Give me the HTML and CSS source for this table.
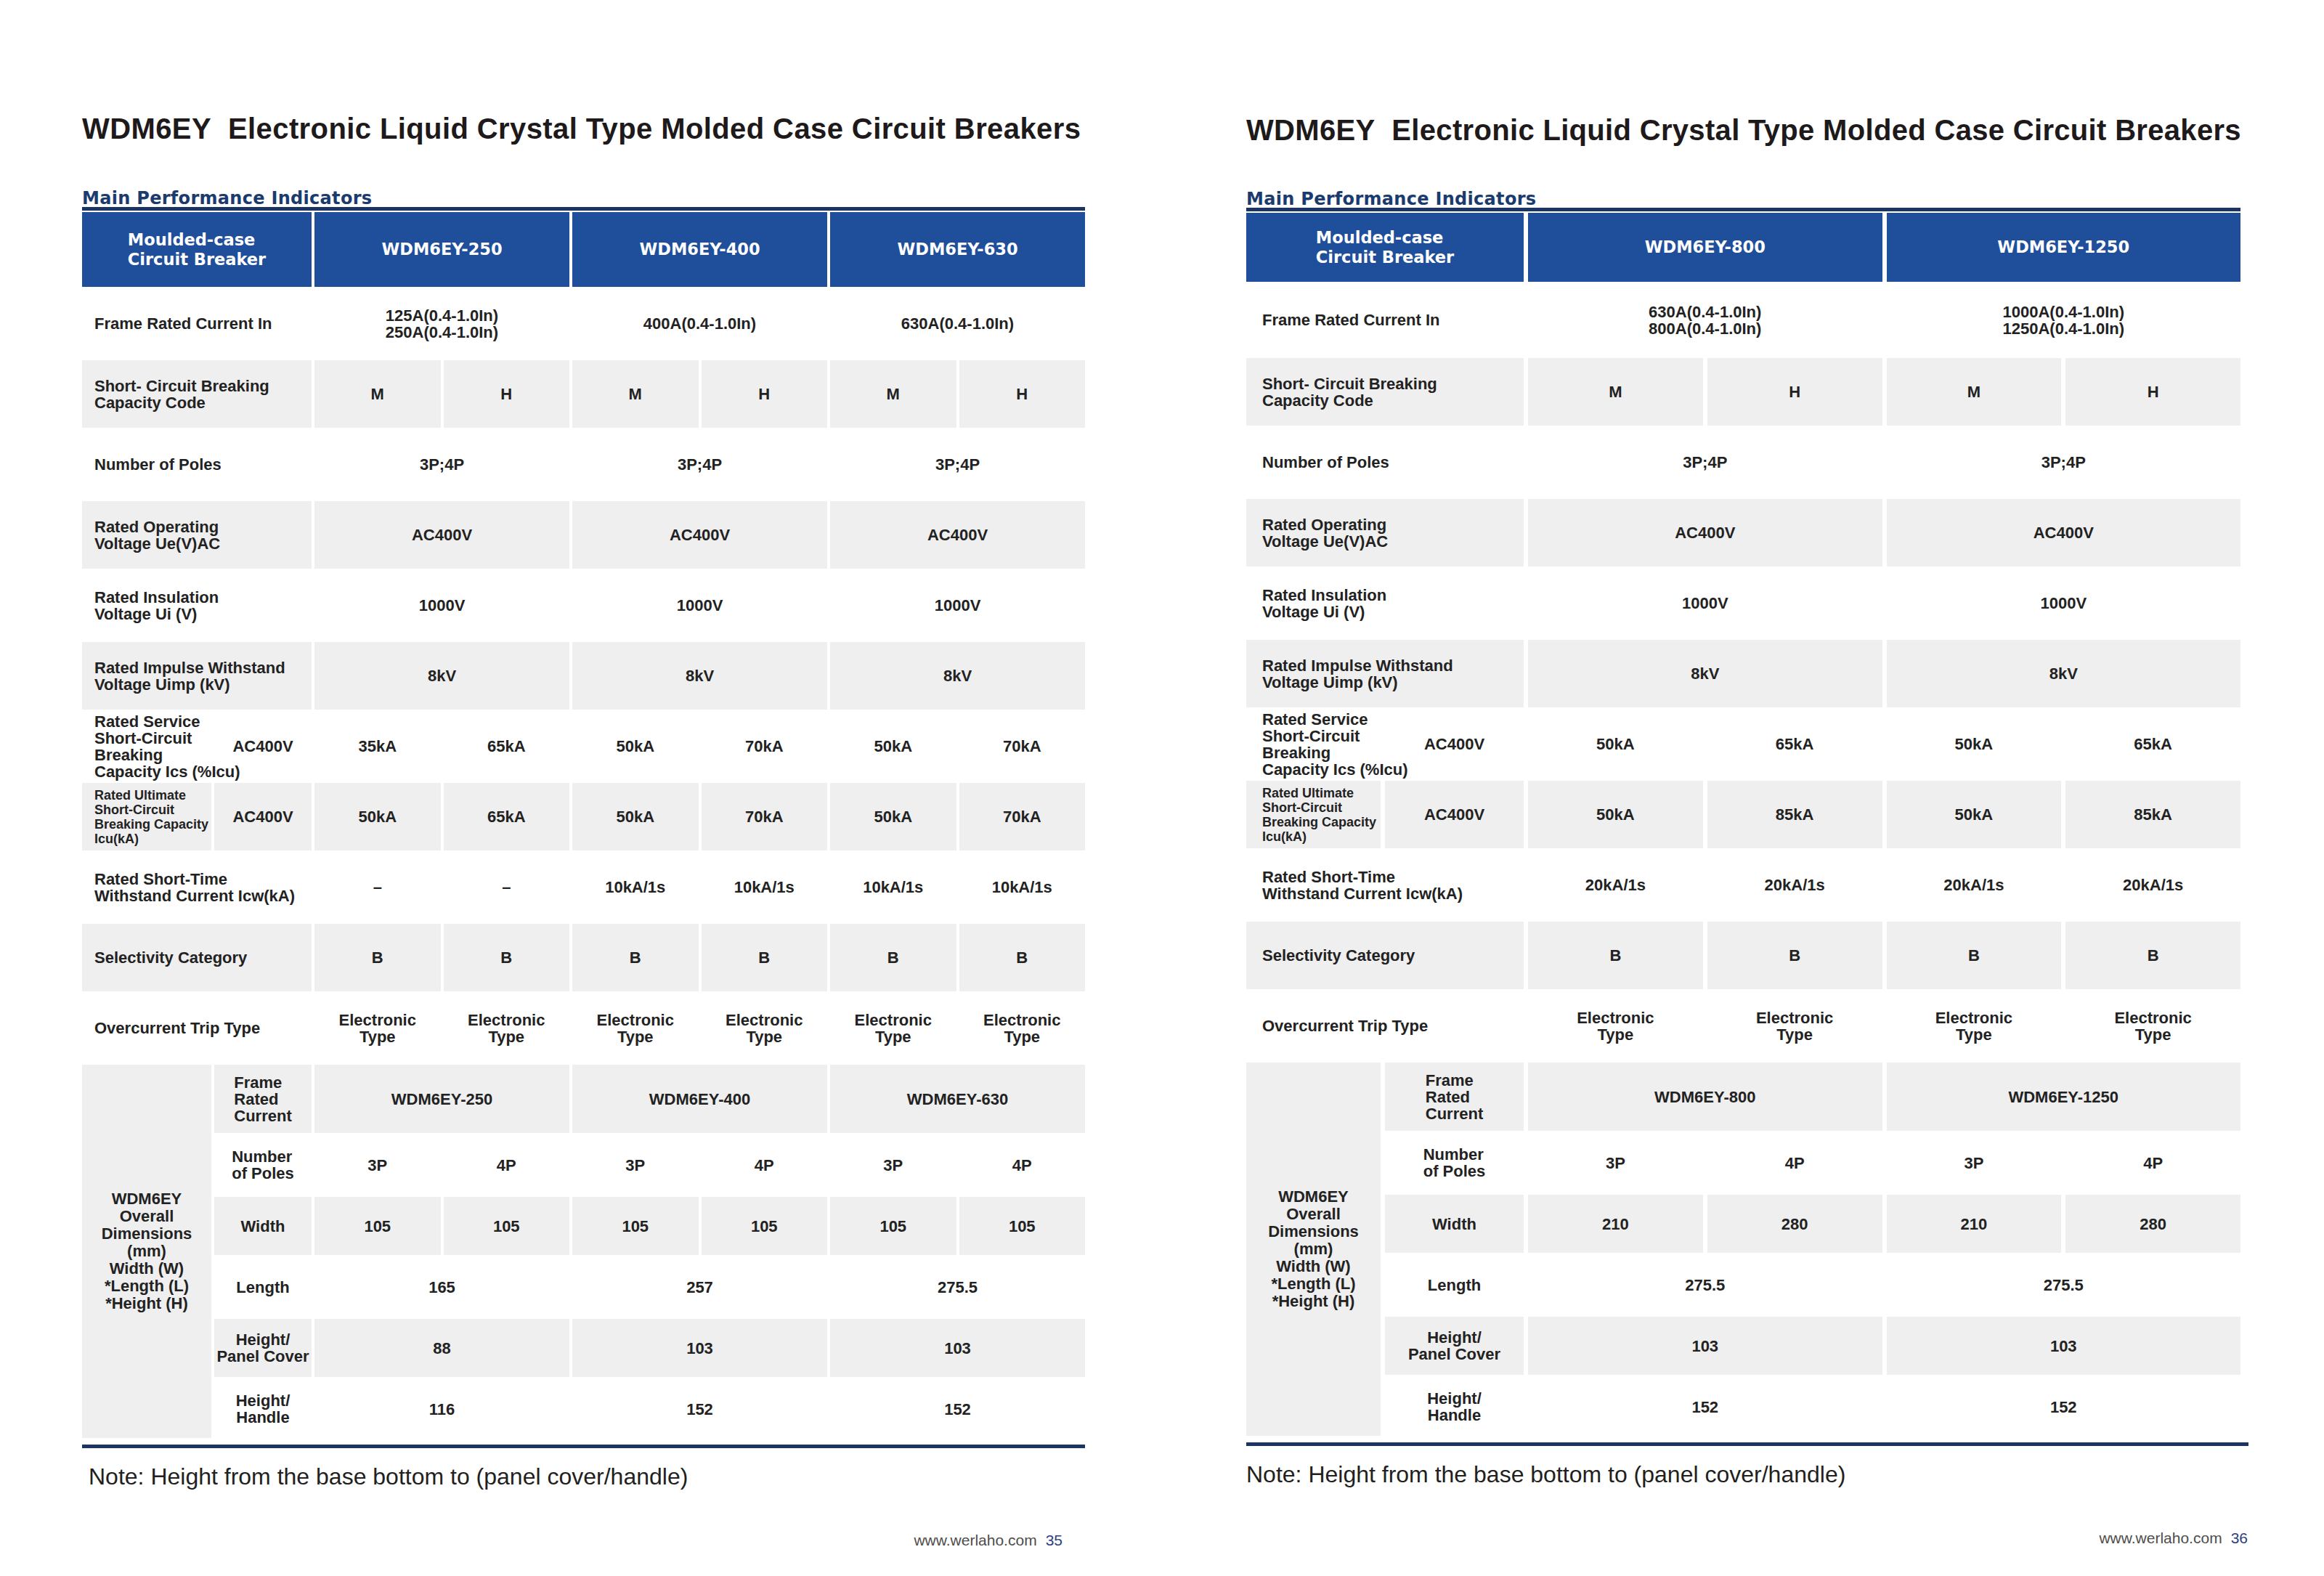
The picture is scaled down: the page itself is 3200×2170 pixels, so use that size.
FILE: index.html
```html
<!DOCTYPE html>
<html lang="en">
<head>
<meta charset="utf-8">
<title>WDM6EY Electronic Liquid Crystal Type Molded Case Circuit Breakers</title>
<link rel="stylesheet" href="styles.css">
</head>
<body>
<div class="spread">
  <section class="page page-l">
    <div class="content content-l">
      <h1 class="title">WDM6EY&nbsp; Electronic Liquid Crystal Type Molded Case Circuit Breakers</h1>
      <h2 class="subhead">Main Performance Indicators</h2>
      <div class="tbl tbl-l">
        <div class="c h s2"><span class="blk">Moulded-case<br>Circuit Breaker</span></div>
        <div class="c h s2">WDM6EY-250</div>
        <div class="c h s2">WDM6EY-400</div>
        <div class="c h s2">WDM6EY-630</div>

        <div class="c lbl s2">Frame Rated Current In</div>
        <div class="c s2">125A(0.4-1.0In)<br>250A(0.4-1.0In)</div>
        <div class="c s2">400A(0.4-1.0In)</div>
        <div class="c s2">630A(0.4-1.0In)</div>

        <div class="c lbl s2 g">Short- Circuit Breaking<br>Capacity Code</div>
        <div class="c g">M</div><div class="c g">H</div>
        <div class="c g">M</div><div class="c g">H</div>
        <div class="c g">M</div><div class="c g">H</div>

        <div class="c lbl s2">Number of Poles</div>
        <div class="c s2">3P;4P</div><div class="c s2">3P;4P</div><div class="c s2">3P;4P</div>

        <div class="c lbl s2 g">Rated Operating<br>Voltage Ue(V)AC</div>
        <div class="c s2 g">AC400V</div><div class="c s2 g">AC400V</div><div class="c s2 g">AC400V</div>

        <div class="c lbl s2">Rated Insulation<br>Voltage Ui (V)</div>
        <div class="c s2">1000V</div><div class="c s2">1000V</div><div class="c s2">1000V</div>

        <div class="c lbl s2 g">Rated Impulse Withstand<br>Voltage Uimp (kV)</div>
        <div class="c s2 g">8kV</div><div class="c s2 g">8kV</div><div class="c s2 g">8kV</div>

        <div class="c lbl">Rated Service<br>Short-Circuit<br>Breaking<br>Capacity Ics (%Icu)</div>
        <div class="c">AC400V</div>
        <div class="c">35kA</div><div class="c">65kA</div>
        <div class="c">50kA</div><div class="c">70kA</div>
        <div class="c">50kA</div><div class="c">70kA</div>

        <div class="c lbl sm g">Rated Ultimate<br>Short-Circuit<br>Breaking Capacity<br>Icu(kA)</div>
        <div class="c g">AC400V</div>
        <div class="c g">50kA</div><div class="c g">65kA</div>
        <div class="c g">50kA</div><div class="c g">70kA</div>
        <div class="c g">50kA</div><div class="c g">70kA</div>

        <div class="c lbl s2">Rated Short-Time<br>Withstand Current Icw(kA)</div>
        <div class="c">–</div><div class="c">–</div>
        <div class="c">10kA/1s</div><div class="c">10kA/1s</div>
        <div class="c">10kA/1s</div><div class="c">10kA/1s</div>

        <div class="c lbl s2 g">Selectivity Category</div>
        <div class="c g">B</div><div class="c g">B</div><div class="c g">B</div>
        <div class="c g">B</div><div class="c g">B</div><div class="c g">B</div>

        <div class="c lbl s2">Overcurrent Trip Type</div>
        <div class="c">Electronic<br>Type</div><div class="c">Electronic<br>Type</div>
        <div class="c">Electronic<br>Type</div><div class="c">Electronic<br>Type</div>
        <div class="c">Electronic<br>Type</div><div class="c">Electronic<br>Type</div>

        <div class="c big g">WDM6EY<br>Overall<br>Dimensions<br>(mm)<br>Width (W)<br>*Length (L)<br>*Height (H)</div>
        <div class="c g"><span class="blk">Frame<br>Rated<br>Current</span></div>
        <div class="c s2 g">WDM6EY-250</div><div class="c s2 g">WDM6EY-400</div><div class="c s2 g">WDM6EY-630</div>

        <div class="c"><span class="blk">Number<br>of Poles</span></div>
        <div class="c">3P</div><div class="c">4P</div>
        <div class="c">3P</div><div class="c">4P</div>
        <div class="c">3P</div><div class="c">4P</div>

        <div class="c g">Width</div>
        <div class="c g">105</div><div class="c g">105</div>
        <div class="c g">105</div><div class="c g">105</div>
        <div class="c g">105</div><div class="c g">105</div>

        <div class="c">Length</div>
        <div class="c s2">165</div><div class="c s2">257</div><div class="c s2">275.5</div>

        <div class="c g">Height/<br>Panel Cover</div>
        <div class="c s2 g">88</div><div class="c s2 g">103</div><div class="c s2 g">103</div>

        <div class="c">Height/<br>Handle</div>
        <div class="c s2">116</div><div class="c s2">152</div><div class="c s2">152</div>
      </div>
      <div class="endline"></div>
      <p class="note">Note: Height from the base bottom to (panel cover/handle)</p>
      <p class="foot foot-l">www.werlaho.com<span class="pg">35</span></p>
    </div>
  </section>

  <section class="page page-r">
    <div class="content content-r">
      <h1 class="title title-r">WDM6EY&nbsp; Electronic Liquid Crystal Type Molded Case Circuit Breakers</h1>
      <h2 class="subhead subhead-r">Main Performance Indicators</h2>
      <div class="tbl tbl-r">
        <div class="c h s2"><span class="blk">Moulded-case<br>Circuit Breaker</span></div>
        <div class="c h s2">WDM6EY-800</div>
        <div class="c h s2">WDM6EY-1250</div>

        <div class="c lbl s2">Frame Rated Current In</div>
        <div class="c s2">630A(0.4-1.0In)<br>800A(0.4-1.0In)</div>
        <div class="c s2">1000A(0.4-1.0In)<br>1250A(0.4-1.0In)</div>

        <div class="c lbl s2 g">Short- Circuit Breaking<br>Capacity Code</div>
        <div class="c g">M</div><div class="c g">H</div>
        <div class="c g">M</div><div class="c g">H</div>

        <div class="c lbl s2">Number of Poles</div>
        <div class="c s2">3P;4P</div><div class="c s2">3P;4P</div>

        <div class="c lbl s2 g">Rated Operating<br>Voltage Ue(V)AC</div>
        <div class="c s2 g">AC400V</div><div class="c s2 g">AC400V</div>

        <div class="c lbl s2">Rated Insulation<br>Voltage Ui (V)</div>
        <div class="c s2">1000V</div><div class="c s2">1000V</div>

        <div class="c lbl s2 g">Rated Impulse Withstand<br>Voltage Uimp (kV)</div>
        <div class="c s2 g">8kV</div><div class="c s2 g">8kV</div>

        <div class="c lbl">Rated Service<br>Short-Circuit<br>Breaking<br>Capacity Ics (%Icu)</div>
        <div class="c">AC400V</div>
        <div class="c">50kA</div><div class="c">65kA</div>
        <div class="c">50kA</div><div class="c">65kA</div>

        <div class="c lbl sm g">Rated Ultimate<br>Short-Circuit<br>Breaking Capacity<br>Icu(kA)</div>
        <div class="c g">AC400V</div>
        <div class="c g">50kA</div><div class="c g">85kA</div>
        <div class="c g">50kA</div><div class="c g">85kA</div>

        <div class="c lbl s2">Rated Short-Time<br>Withstand Current Icw(kA)</div>
        <div class="c">20kA/1s</div><div class="c">20kA/1s</div>
        <div class="c">20kA/1s</div><div class="c">20kA/1s</div>

        <div class="c lbl s2 g">Selectivity Category</div>
        <div class="c g">B</div><div class="c g">B</div>
        <div class="c g">B</div><div class="c g">B</div>

        <div class="c lbl s2">Overcurrent Trip Type</div>
        <div class="c">Electronic<br>Type</div><div class="c">Electronic<br>Type</div>
        <div class="c">Electronic<br>Type</div><div class="c">Electronic<br>Type</div>

        <div class="c big g">WDM6EY<br>Overall<br>Dimensions<br>(mm)<br>Width (W)<br>*Length (L)<br>*Height (H)</div>
        <div class="c g"><span class="blk">Frame<br>Rated<br>Current</span></div>
        <div class="c s2 g">WDM6EY-800</div><div class="c s2 g">WDM6EY-1250</div>

        <div class="c"><span class="blk">Number<br>of Poles</span></div>
        <div class="c">3P</div><div class="c">4P</div>
        <div class="c">3P</div><div class="c">4P</div>

        <div class="c g">Width</div>
        <div class="c g">210</div><div class="c g">280</div>
        <div class="c g">210</div><div class="c g">280</div>

        <div class="c">Length</div>
        <div class="c s2">275.5</div><div class="c s2">275.5</div>

        <div class="c g">Height/<br>Panel Cover</div>
        <div class="c s2 g">103</div><div class="c s2 g">103</div>

        <div class="c">Height/<br>Handle</div>
        <div class="c s2">152</div><div class="c s2">152</div>
      </div>
      <div class="endline endline-r"></div>
      <p class="note note-r">Note: Height from the base bottom to (panel cover/handle)</p>
      <p class="foot foot-r">www.werlaho.com<span class="pg">36</span></p>
    </div>
  </section>
</div>
</body>
</html>
```
FILE: styles.css
```css
html, body {
  margin: 0;
  padding: 0;
  background: #ffffff;
}
body {
  width: 3200px;
  height: 2170px;
  overflow: hidden;
  font-family: "Liberation Sans", Arial, sans-serif;
  color: #231f20;
}
.spread {
  display: flex;
  width: 3200px;
}
.page {
  width: 1600px;
  box-sizing: border-box;
}
.page-l {
  padding: 154px 0 0 113px;
}
.page-r {
  padding: 156px 0 0 116px;
}
.content-l { width: 1381px; }
.content-r { width: 1369px; }

.title {
  margin: 0;
  font: bold 40px/46px "Liberation Sans", Arial, sans-serif;
  letter-spacing: 0.4px;
  color: #1e1a1b;
  white-space: nowrap;
}
.title-r { letter-spacing: 0.32px; }

.subhead {
  margin: 61px 0 2px 0;
  font: bold 24px/24px "DejaVu Sans", sans-serif;
  letter-spacing: 0.3px;
  color: #1b3b6f;
  border-bottom: 5px solid #1c3462;
  white-space: nowrap;
}
.subhead-r { margin-top: 60px; }

.tbl {
  display: grid;
  column-gap: 4px;
  row-gap: 4px;
}
.tbl-l {
  grid-template-columns: 178px 134px repeat(6, minmax(0, 1fr));
  grid-template-rows: 103px repeat(11, 93px) 94px repeat(5, 80px);
}
.tbl-r {
  column-gap: 6px;
  grid-template-columns: 185px 191px repeat(4, minmax(0, 1fr));
  grid-template-rows: 95px 97px repeat(10, 93px) 94px repeat(5, 80px);
}

.c {
  display: flex;
  align-items: center;
  justify-content: center;
  text-align: center;
  font: bold 22px/23px "Liberation Sans", Arial, sans-serif;
  color: #222222;
  white-space: nowrap;
  min-width: 0;
}
.g { background: #efefef; }
.h {
  background: #1f4f9b;
  color: #ffffff;
  font: bold 22.5px/27px "DejaVu Sans", sans-serif;
}
.s2 { grid-column: span 2; }
.lbl {
  justify-content: flex-start;
  text-align: left;
  padding-left: 17px;
}
.tbl-r .lbl { padding-left: 22px; }
.sm {
  font-size: 18px;
  line-height: 20px;
}
.big {
  grid-row: span 6;
  line-height: 24px;
}
.blk {
  display: inline-block;
  text-align: left;
}

.endline {
  height: 5px;
  margin-top: 9px;
  background: #1c3462;
}
.endline-r { margin-right: -11px; }

.note {
  margin: 21px 0 0 0;
  padding-left: 9px;
  font: 32px/36px "Liberation Sans", Arial, sans-serif;
  color: #231f20;
  white-space: nowrap;
}
.note-r { padding-left: 0; }

.foot {
  margin: 58px 0 0 0;
  font: 21px/24px "Liberation Sans", Arial, sans-serif;
  color: #4d4d4d;
  text-align: right;
  white-space: nowrap;
}
.foot-l { margin-right: 31px; }
.foot-r { margin-right: -10px; }
.pg {
  color: #2e3f85;
  margin-left: 12px;
}
```
